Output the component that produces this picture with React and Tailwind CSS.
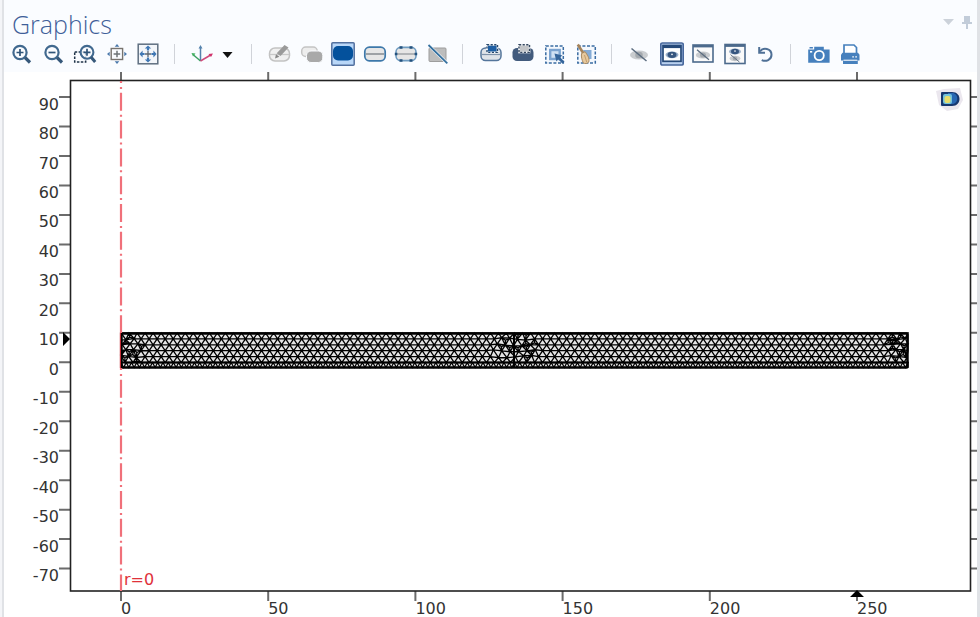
import React from "react";

const X_TICKS = [0, 50, 100, 150, 200, 250];
const Y_TICKS = [90, 80, 70, 60, 50, 40, 30, 20, 10, 0, -10, -20, -30, -40, -50, -60, -70];

const plotX = (r) => 117 + r * 2.944;
const plotY = (z) => 290.3 - z * 2.947;

const Icon = ({ children }) => (
  <svg viewBox="0 0 24 24" className="block size-6" fill="none" aria-hidden="true">
    {children}
  </svg>
);

const Eye = ({ cx, cy, rx = 7, ry = 3.4, color = "#36567f", light = "#9db2cc" }) => (
  <>
    <ellipse cx={cx} cy={cy} rx={rx} ry={ry} fill={light} />
    <ellipse cx={cx} cy={cy} rx={rx - 2} ry={ry - 0.3} fill={color} />
    <circle cx={cx} cy={cy - 0.4} r="0.8" fill="#fff" />
  </>
);

const HiddenEye = ({ cx, cy, s = 1 }) => (
  <g transform={`translate(${cx} ${cy}) scale(${s})`}>
    <ellipse rx="9" ry="4.5" fill="#c9cccf" />
    <ellipse rx="3.8" ry="3.2" fill="#a4a9ae" />
    <path d="M-7.5 -6.5 7.5 6" stroke="#5a6b7e" strokeWidth="1.5" />
  </g>
);

const Frame = ({ x = 2, y = 3, w = 20, h = 17 }) => (
  <>
    <rect x={x} y={y} width={w} height={h} fill="#fafafa" stroke="#4c6a8c" strokeWidth="1.6" />
    <path d={`M${x} ${y + 1.2}h${w}`} stroke="#4c6a8c" strokeWidth="2.4" />
  </>
);

const zoomGroup = [
  {
    name: "Zoom In",
    icon: (
      <>
        <circle cx="10" cy="10.5" r="6.6" stroke="#41698f" strokeWidth="2.2" />
        <path d="M6.5 10.5h7M10 7v7" stroke="#2f5478" strokeWidth="1.7" />
        <path d="m15 15.5 5 5" stroke="#36587a" strokeWidth="3.2" />
      </>
    ),
  },
  {
    name: "Zoom Out",
    icon: (
      <>
        <circle cx="10" cy="10.5" r="6.6" stroke="#41698f" strokeWidth="2.2" />
        <path d="M6.5 10.5h7" stroke="#2f5478" strokeWidth="1.7" />
        <path d="m15 15.5 5 5" stroke="#36587a" strokeWidth="3.2" />
      </>
    ),
  },
  {
    name: "Zoom Box",
    icon: (
      <>
        <rect x="1.7" y="10" width="11" height="10" stroke="#1f3348" strokeWidth="1.5" strokeDasharray="2.5 1.4" />
        <circle cx="14" cy="10.3" r="6.4" fill="#fafcff" fillOpacity=".7" stroke="#41698f" strokeWidth="2.1" />
        <path d="M10.5 10.3h7M14 6.8v7" stroke="#2f5478" strokeWidth="1.7" />
        <path d="m18 15 4.2 5" stroke="#36587a" strokeWidth="3" />
      </>
    ),
  },
  {
    name: "Zoom to Selection",
    icon: (
      <>
        <rect x="6.2" y="6.5" width="11.4" height="11" stroke="#77736e" strokeWidth="1.4" />
        <path d="M8.6 12h6.6M12 8.8v6.4" stroke="#6e7377" strokeWidth="1.5" />
        <path d="m12 2 2.3 2.8H9.7zM12 22l2.3-2.8H9.7zM2 12l2.7-2.3v4.6zM22 12l-2.7-2.3v4.6z" fill="#4a78ab" />
      </>
    ),
  },
  {
    name: "Zoom Extents",
    icon: (
      <>
        <rect x="2.2" y="2.2" width="19.6" height="19.6" fill="#f3f6fa" stroke="#5f6f80" strokeWidth="1.5" />
        <path d="M9 12h6M12 9v6" stroke="#5a6673" strokeWidth="1.3" />
        <path
          d="m12 3.4 3.2 3.2h-2.1v2h-2.2v-2H8.8zM12 20.6l3.2-3.2h-2.1v-2h-2.2v2H8.8zM3.4 12l3.2-3.4v2.3h2v2.2h-2v2.3zM20.6 12l-3.2-3.4v2.3h-2v2.2h2v2.3z"
          fill="#3f77b4"
        />
      </>
    ),
  },
];

const selectGroup = [
  {
    name: "Edit Objects",
    icon: (
      <>
        <rect x="1.5" y="6" width="20" height="13" rx="5.5" fill="#f0f0f0" stroke="#c2c2c2" strokeWidth="1.5" />
        <path d="M2 12.5h19" stroke="#c8c8c8" strokeWidth="1.3" />
        <path d="m16.5 3 4 2.6-8 8.4-3.8-2.8z" fill="#9a9a9a" />
        <path d="m8 12.3 3.4 2.4-4.4 1.8z" fill="#858585" />
      </>
    ),
  },
  {
    name: "Select Objects",
    icon: (
      <>
        <rect x="1.7" y="5" width="15.5" height="9.5" rx="4" fill="#ededed" stroke="#c4c4c4" strokeWidth="1.5" />
        <rect x="6.5" y="9" width="16.3" height="11.5" rx="4.5" fill="#a9a9a9" stroke="#fafcff" strokeWidth="1" />
      </>
    ),
  },
  {
    name: "Select Domains",
    pressed: true,
    icon: (
      <>
        <rect x=".8" y=".8" width="22.4" height="22.4" rx="1" fill="#b9d7f8" stroke="#52709f" strokeWidth="1.5" />
        <rect x="2" y="4" width="20" height="14.4" rx="5" fill="#04519c" />
      </>
    ),
  },
  {
    name: "Select Boundaries",
    icon: (
      <>
        <rect x="1.8" y="5.2" width="20.4" height="13.6" rx="4.5" fill="#e6e6e6" stroke="#3d78aa" strokeWidth="1.7" />
        <path d="M3 12h18" stroke="#8b9095" strokeWidth="1.6" />
      </>
    ),
  },
  {
    name: "Select Points",
    icon: (
      <>
        <rect x="2" y="5.4" width="20" height="13.2" rx="4.5" fill="#e6e6e6" stroke="#6e9bc0" strokeWidth="1.6" />
        <path d="M3 12h18" stroke="#9a9ea2" strokeWidth="1.4" />
        <path
          d="M5.5 4.2h3v2.6h-3zM15.5 4.2h3v2.6h-3zM5.5 17.2h3v2.6h-3zM15.5 17.2h3v2.6h-3zM.8 10.7h2.6v2.6H.8zM20.6 10.7h2.6v2.6h-2.6z"
          fill="#24527e"
        />
      </>
    ),
  },
  {
    name: "No Selection",
    icon: (
      <>
        <rect x="3" y="6" width="17" height="13.5" rx="1" fill="#bdbdbd" stroke="#9d9d9d" />
        <path d="m2.5 3 18.8 18.4" stroke="#fafcff" strokeWidth="3" />
        <path d="m2.5 3 18.8 18.4" stroke="#34709f" strokeWidth="1.8" />
      </>
    ),
  },
];

const boxGroup = [
  {
    name: "Select Box",
    icon: (
      <>
        <rect x="2" y="6" width="20" height="12.5" rx="4.5" fill="#dfe3e8" stroke="#54759b" strokeWidth="1.5" />
        <path d="M2.5 12.5h19" stroke="#7f93aa" strokeWidth="1.2" />
        <rect x="8" y="2.8" width="10.5" height="7.6" fill="#1d5ea3" stroke="#fafcff" strokeWidth="1.8" />
        <rect x="8" y="2.8" width="10.5" height="7.6" stroke="#27486c" strokeWidth="1.4" strokeDasharray="2.2 1.4" />
      </>
    ),
  },
  {
    name: "Deselect Box",
    icon: (
      <>
        <rect x="1.5" y="6" width="21" height="13" rx="4.5" fill="#425b7d" />
        <rect x="8" y="2.8" width="10.5" height="7.6" fill="#c3c5c8" stroke="#f2f4f7" strokeWidth="1.8" />
        <rect x="8" y="2.8" width="10.5" height="7.6" stroke="#34475f" strokeWidth="1.4" strokeDasharray="2.2 1.4" />
      </>
    ),
  },
  {
    name: "Select Adjacent",
    icon: (
      <>
        <rect x="2.8" y="4" width="17.5" height="17" fill="#f4f8fd" stroke="#3a6ca3" strokeWidth="1.5" strokeDasharray="3 1.6" />
        <rect x="7.2" y="8" width="9.5" height="9" fill="#cfe0f3" stroke="#7ba3d0" strokeWidth="2.4" />
        <path d="m11.5 11.5 8 2-2.4 1.8 4.4 4.4-2 2-4.3-4.4-1.8 2.3z" fill="#35659b" />
      </>
    ),
  },
  {
    name: "Clear Selection",
    icon: (
      <>
        <rect x="2.8" y="4" width="17.5" height="17" fill="#f4f8fd" stroke="#3a6ca3" strokeWidth="1.5" strokeDasharray="3 1.6" />
        <path d="M8 8h8.5v9H12z" fill="#84abd6" />
        <path d="m2.8 2.5 5.7 9" stroke="#a5835b" strokeWidth="2.6" />
        <path d="m6.5 11.5 3.6-1.8c2 3 4.7 6 3.7 10.2-1.4 1.7-3.8 2-5.4 1.2-1.5-3.4-2.4-6-1.9-9.6z" fill="#e6c89d" stroke="#a88960" />
        <path d="m9.500 13 2.2 7" stroke="#c29d6d" />
      </>
    ),
  },
];

const viewGroup = [
  { name: "Click and Hide", icon: <HiddenEye cx={11} cy={13} /> },
  {
    name: "View All",
    pressed: true,
    icon: (
      <>
        <rect x=".8" y="1" width="22.4" height="22" rx="1.5" fill="#b9d0ef" stroke="#47679c" strokeWidth="1.7" />
        <rect x="3" y="3.5" width="18" height="15.8" fill="#fff" stroke="#254978" strokeWidth="1.7" />
        <path d="M3 5h18" stroke="#254978" strokeWidth="2.2" />
        <Eye cx={12} cy={12.8} rx={6.5} />
      </>
    ),
  },
  {
    name: "View Hidden Only",
    icon: (
      <>
        <Frame />
        <HiddenEye cx={12} cy={13} s={0.8} />
      </>
    ),
  },
  {
    name: "View Both",
    icon: (
      <>
        <Frame y={2.5} h={19} />
        <Eye cx={12} cy={9.5} rx={6} ry={3} />
        <HiddenEye cx={12} cy={16.5} s={0.6} />
      </>
    ),
  },
  {
    name: "Reset Hiding",
    icon: (
      <>
        <path d="M6 9.500c3-4.600 11.500-3.300 11.500 3.200 0 5-5.500 7.400-9.800 5.400" stroke="#4f7096" strokeWidth="2" />
        <path d="M5.200 5v5.800h5.800" stroke="#4f7096" strokeWidth="2" />
      </>
    ),
  },
];

const outputGroup = [
  {
    name: "Image Snapshot",
    icon: (
      <>
        <path d="M1.2 7.5h6V4.8h9.6v2.7h5.8v13.2H1.2z" fill="#4680bd" />
        <path d="M2.5 5h3.4v1.5H2.5z" fill="#4680bd" />
        <circle cx="12.2" cy="13.5" r="4.6" fill="#4680bd" stroke="#fff" strokeWidth="1.8" />
        <path d="M3 9h2.2v1.6H3z" fill="#fff" />
      </>
    ),
  },
  {
    name: "Print",
    icon: (
      <>
        <path d="M5 11.500V3h10l2.500 2.500v6" fill="#fff" stroke="#4680bd" strokeWidth="1.7" />
        <path d="M3.500 10.800h15.500l1.500 2v5.700h-18.500v-5.700z" fill="#4680bd" />
        <path d="M4 18.500h14.800v3.500H4z" fill="#4680bd" />
        <path d="M4.500 18.200h13.800" stroke="#fff" strokeWidth="1" />
        <path d="M13.300 14.800h1.600M16.300 14.800h1.600" stroke="#fff" strokeWidth="1.300" />
      </>
    ),
  },
];

const ToolGroup = ({ items, className }) => (
  <div className={`flex shrink-0 items-center justify-between ${className}`}>
    {items.map((item) => (
      <button key={item.name} type="button" aria-label={item.name} aria-pressed={item.pressed} className="cursor-pointer">
        <Icon>{item.icon}</Icon>
      </button>
    ))}
  </div>
);

const Separator = () => <div className="ml-3 mr-4 h-5 w-px shrink-0 bg-[#d0d3d9]" />;

// triangulated strip, refined around the x positions listed in "dense"
function meshPath(x0, y0, width, height, cols, rows, dense) {
  const dx = width / cols;
  const dy = height / rows;
  const isDense = (x, y) => dense.some((d) => Math.abs(x - d) < 24 - Math.abs(y - y0 - height / 2) * 0.6);
  const point = (i, j) => {
    let x = x0 + (i + (j % 2 ? 0.5 : 0)) * dx;
    let y = y0 + j * dy;
    if (isDense(x, y) && j > 0 && j < rows) {
      x += Math.sin(i * 12.9 + j * 7.1) * 1.2;
      y += Math.cos(i * 5.3 + j * 11.7) * 1.2;
    }
    return [Math.min(Math.max(x, x0), x0 + width), y];
  };
  let d = "";
  const triangle = (a, b, c) => {
    d += `M${a}L${b}L${c}Z`;
    const m = [(a[0] + b[0] + c[0]) / 3, (a[1] + b[1] + c[1]) / 3];
    if (isDense(m[0], m[1]) && Math.sin(m[0] * 3 + m[1]) > 0.5) {
      d += `M${a}L${m}L${b}M${m}L${c}`;
    }
  };
  for (let j = 0; j < rows; j++) {
    for (let i = j % 2 ? -1 : 0; i < cols; i++) {
      if (j % 2) {
        triangle(point(i, j), point(i + 1, j), point(i + 1, j + 1));
        triangle(point(i, j), point(i, j + 1), point(i + 1, j + 1));
      } else {
        triangle(point(i, j), point(i + 1, j), point(i, j + 1));
        triangle(point(i + 1, j), point(i, j + 1), point(i + 1, j + 1));
      }
    }
  }
  return d;
}

const upperMesh = meshPath(117, 261, 787, 29.5, 98, 5, [117, 510, 904]);
const lowerMesh = meshPath(117, 290.5, 787, 5, 150, 1, []);

const Plot = () => (
  <svg
    viewBox="0 0 973 545"
    className="block h-auto w-full bg-white"
    fontFamily="'DejaVu Sans', sans-serif"
    fontSize="16"
    role="img"
    aria-label="Mesh plot"
  >
    <g stroke="#6b6b6b" strokeWidth="2">
      {X_TICKS.map((r) => (
        <path key={r} d={`M${plotX(r)} 0v8M${plotX(r)} 519v10`} />
      ))}
      {Y_TICKS.map((z) => (
        <path key={z} d={`M55 ${plotY(z)}h11M967 ${plotY(z)}h6`} />
      ))}
    </g>
    <rect x="66.5" y="8.5" width="900" height="510.5" fill="#fff" stroke="#222" strokeWidth="1.6" />

    <g fill="#333">
      {Y_TICKS.map((z) => (
        <text key={z} x="55" y={plotY(z) + 12.5} textAnchor="end">
          {z}
        </text>
      ))}
      {X_TICKS.map((r) => (
        <text key={r} x={plotX(r)} y="542">
          {r}
        </text>
      ))}
    </g>

    {/* mesh */}
    <rect x="117" y="261" width="787" height="35" fill="#e4e4e4" />
    <path d={upperMesh} stroke="#000" strokeWidth="1.3" fill="none" />
    <path d={lowerMesh} stroke="#000" strokeWidth="1.2" fill="none" />
    <path d="M117 290.5h787M510 261v35" stroke="#000" strokeWidth="2" />
    <rect x="117.5" y="261.5" width="786" height="34" rx="1" fill="none" stroke="#000" strokeWidth="2.4" />

    {/* symmetry axis */}
    <path d="M117 9v252M117 296v223" stroke="#f0707a" strokeWidth="2.2" strokeDasharray="18 3.9 2 3.9" strokeDashoffset="16" />
    <path d="M116.4 261v35" stroke="#c02a33" strokeWidth="1.2" />
    <text x="120" y="513" fill="#e0313a">
      r=0
    </text>

    {/* position markers */}
    <path d="M59 260v14l7-7zM853 518l7 7h-14z" fill="#000" />

    {/* orientation logo */}
    <path d="m932 19 8-2 16-1 3 12-5 9-11 2-8-6z" fill="#ebe7ee" />
    <path d="M938 20h10c10 0 10 14 0 14h-10q-1 0-1-1V21q0-1 1-1z" fill="#17386f" />
    <path d="M944 21h4c7 0 7 11 0 11h-4z" fill="#2867b2" />
    <rect x="939" y="22" width="9" height="10" rx="2" fill="#73c2dc" />
    <rect x="940.5" y="24" width="6" height="7" rx="2" fill="#e8dd6b" />
  </svg>
);

const App = () => {
  return (
    <div className="flex min-h-screen bg-[#f4f5f8]">
      <main className="ml-0.5 flex min-w-0 flex-1 flex-col border-l-2 border-r-3 border-[#e0e2e6] bg-white">
        <header className="h-18 overflow-hidden bg-[#fafcff]">
          <div className="flex h-10 items-start justify-between pl-2 pr-1 pt-1">
            <h1 className="font-['Open_Sans'] text-[25px] font-light leading-10 text-[#3f5f99]">Graphics</h1>
            <div className="mt-2 flex gap-1 pt-0.5">
              <button type="button" aria-label="Panel menu">
                <svg viewBox="0 0 16 16" className="block size-4">
                  <path d="M2 5h11l-5.5 6z" fill="#ccd2da" />
                </svg>
              </button>
              <button type="button" aria-label="Pin panel">
                <svg viewBox="0 0 12 16" className="block h-4 w-3">
                  <path d="M3 2h6v6h2v2H7v5H5v-5H1V8h2z" fill="#c2ccd9" />
                </svg>
              </button>
            </div>
          </div>

          <div className="flex items-center pl-1.5 pt-0.5">
            <ToolGroup items={zoomGroup} className="w-38 pr-0.5" />
            <Separator />
            <div className="flex w-12 shrink-0 items-center">
              <button type="button" aria-label="Default View">
                <Icon>
                  <path d="M9.5 19V5" stroke="#5583ad" strokeWidth="1.5" />
                  <path d="m9.5 19-7-6" stroke="#3d9f62" strokeWidth="1.5" />
                  <path d="m9.5 19 11-6.5" stroke="#d04a7c" strokeWidth="1.5" />
                  <path d="m9.5 3 2 3.5h-4z" fill="#5583ad" />
                  <path d="m.5 11 4 .5-2.5 3z" fill="#3fae5f" />
                  <path d="m22 11.5-2 3.5-2.5-3z" fill="#d0346c" />
                </Icon>
              </button>
              <button type="button" aria-label="More views">
                <Icon>
                  <path d="M7.5 10h10l-5 6z" fill="#111" />
                </Icon>
              </button>
            </div>
            <Separator />
            <ToolGroup items={selectGroup} className="w-[182px]" />
            <Separator />
            <ToolGroup items={boxGroup} className="w-30" />
            <Separator />
            <ToolGroup items={viewGroup} className="w-[150px]" />
            <Separator />
            <ToolGroup items={outputGroup} className="w-14" />
          </div>
        </header>
        <Plot />
      </main>
    </div>
  );
};

export default App;
